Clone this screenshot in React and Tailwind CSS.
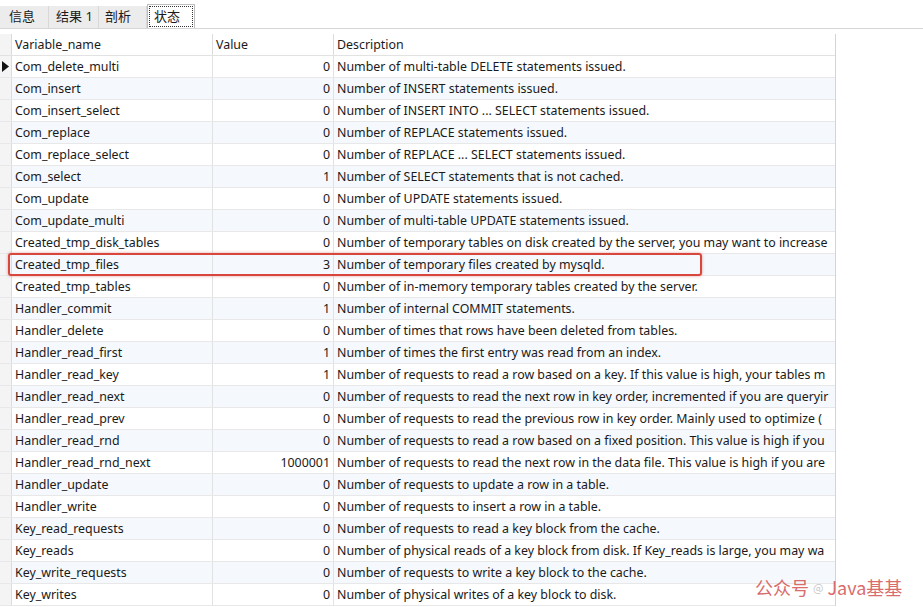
import React from 'react';

const rows = [
  ['Com_delete_multi', '0', 'Number of multi-table DELETE statements issued.'],
  ['Com_insert', '0', 'Number of INSERT statements issued.'],
  ['Com_insert_select', '0', 'Number of INSERT INTO ... SELECT statements issued.'],
  ['Com_replace', '0', 'Number of REPLACE statements issued.'],
  ['Com_replace_select', '0', 'Number of REPLACE ... SELECT statements issued.'],
  ['Com_select', '1', 'Number of SELECT statements that is not cached.'],
  ['Com_update', '0', 'Number of UPDATE statements issued.'],
  ['Com_update_multi', '0', 'Number of multi-table UPDATE statements issued.'],
  ['Created_tmp_disk_tables', '0', 'Number of temporary tables on disk created by the server, you may want to increase'],
  ['Created_tmp_files', '3', 'Number of temporary files created by mysqld.'],
  ['Created_tmp_tables', '0', 'Number of in-memory temporary tables created by the server.'],
  ['Handler_commit', '1', 'Number of internal COMMIT statements.'],
  ['Handler_delete', '0', 'Number of times that rows have been deleted from tables.'],
  ['Handler_read_first', '1', 'Number of times the first entry was read from an index.'],
  ['Handler_read_key', '1', 'Number of requests to read a row based on a key. If this value is high, your tables m'],
  ['Handler_read_next', '0', 'Number of requests to read the next row in key order, incremented if you are queryir'],
  ['Handler_read_prev', '0', 'Number of requests to read the previous row in key order. Mainly used to optimize ('],
  ['Handler_read_rnd', '0', 'Number of requests to read a row based on a fixed position. This value is high if you'],
  ['Handler_read_rnd_next', '1000001', 'Number of requests to read the next row in the data file. This value is high if you are'],
  ['Handler_update', '0', 'Number of requests to update a row in a table.'],
  ['Handler_write', '0', 'Number of requests to insert a row in a table.'],
  ['Key_read_requests', '0', 'Number of requests to read a key block from the cache.'],
  ['Key_reads', '0', 'Number of physical reads of a key block from disk. If Key_reads is large, you may wa'],
  ['Key_write_requests', '0', 'Number of requests to write a key block to the cache.'],
  ['Key_writes', '0', 'Number of physical writes of a key block to disk.'],
];

const tabs = ['信息', '结果 1', '剖析'];

export default function App() {
  return (
    <div
      className="relative w-[923px] h-[607px] overflow-hidden bg-white text-[12.4px] text-[#1a1a1a]"
      style={{ fontFamily: '"Noto Sans", "Noto Sans CJK SC", sans-serif' }}
    >
      {/* tab bar */}
      <div className="flex items-end h-[29px] border-b border-[#d6d6d6] bg-white text-[13px]">
        {tabs.map((t, i) => (
          <div
            key={t}
            className={`h-[22px] flex items-center bg-[#ececec] border-r border-[#d8d8d8] ${i === 0 ? 'w-[49px] pl-[9px]' : i === 1 ? 'w-[50px] pl-[7px]' : 'w-[48px] pl-[6px]'}`}
          >
            {t}
          </div>
        ))}
        <div className="h-[24px] w-[48px] bg-white border border-[#bdbdbd] border-b-0 p-[1px]">
          <div className="h-full border border-dotted border-[#333] flex items-start pl-[4px] leading-[18px]">
            状态
          </div>
        </div>
      </div>

      {/* grid */}
      <div className="mt-[5px] w-[836px] border-r border-[#d4d4d4]">
        <div className="flex h-[22px] border-b border-[#e2e2e2]">
          <div className="w-[12px] shrink-0 bg-[#f4f4f4] border-r border-[#dcdcdc]" />
          <div className="w-[201px] shrink-0 pl-[3px] pt-[2px] flex items-center border-r border-[#dcdcdc]">Variable_name</div>
          <div className="w-[121px] shrink-0 pl-[3px] pt-[2px] flex items-center border-r border-[#dcdcdc]">Value</div>
          <div className="flex-1 pl-[3px] pt-[2px] flex items-center">Description</div>
        </div>
        {rows.map((r, i) => (
          <div
            key={r[0]}
            className={`flex h-[22px] border-b border-[#e8e8e8] ${i % 2 === 1 ? 'bg-[#f5f9fd]' : 'bg-white'}`}
          >
            <div className="w-[12px] shrink-0 bg-[#f4f4f4] border-r border-[#dcdcdc] flex items-center justify-center">
              {i === 0 && (
                <svg width="7" height="11" viewBox="0 0 7 11">
                  <path d="M0 0 L7 5.5 L0 11 Z" fill="#111" />
                </svg>
              )}
            </div>
            <div className="w-[201px] shrink-0 pl-[3px] pt-[1px] flex items-center border-r border-[#e2e2e2] whitespace-nowrap overflow-hidden">
              {r[0]}
            </div>
            <div className="w-[121px] shrink-0 pr-[3px] pt-[1px] flex items-center justify-end border-r border-[#e2e2e2]">
              {r[1]}
            </div>
            <div className="flex-1 min-w-0 pl-[3px] pt-[1px] flex items-center whitespace-nowrap overflow-hidden">{r[2]}</div>
          </div>
        ))}
      </div>

      {/* highlight box */}
      <div className="absolute left-[8px] top-[253px] w-[694px] h-[23px] rounded-[3px] border-2 border-[#d8473d] shadow-[0_0_3px_rgba(200,60,50,0.5)]" />

      {/* watermark */}
      <div
        className="absolute left-[755px] top-[574px] flex items-center gap-[4px] text-[18px] text-[#d04848] opacity-80"
        style={{ fontFamily: '"Noto Sans CJK SC", sans-serif' }}
      >
        <span>公众号</span>
        <span className="text-[11px] text-[#bbb]">@</span>
        <span>Java基基</span>
      </div>
    </div>
  );
}
